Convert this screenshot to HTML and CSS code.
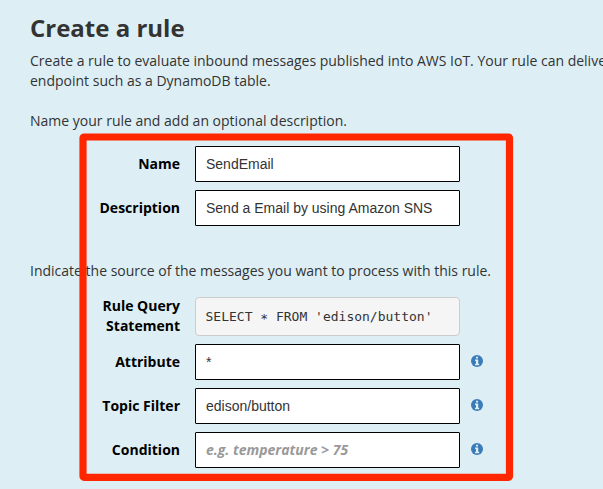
FILE: index.html
```html
<!DOCTYPE html>
<html lang="en">
<head>
<meta charset="utf-8">
<title>Create a rule</title>
<link rel="stylesheet" href="styles.css">
</head>
<body>
<main class="page">
  <h1>Create a rule</h1>
  <p class="intro">Create a rule to evaluate inbound messages published into AWS IoT. Your rule can deliver<br>endpoint such as a DynamoDB table.</p>
  <p class="lead">Name your rule and add an optional description.</p>
  <section class="fields">
    <label class="row"><span class="label">Name</span><input class="control" value="SendEmail"></label>
    <label class="row"><span class="label">Description</span><input class="control" value="Send a Email by using Amazon SNS"></label>
  </section>
  <p class="source">Indicate the source of the messages you want to process with this rule.</p>
  <section class="fields query">
    <div class="row tall"><span class="label">Rule Query Statement</span><code class="control statement">SELECT <span class="star">*</span> FROM 'edison/button'</code></div>
    <div class="row"><span class="label">Attribute</span><input class="control" value="*"><svg class="info" viewBox="0 0 12 12"><circle cx="6" cy="6" r="6"/><path d="M5 1.7h2v1.8H5zM4 4.5h3.2v4.2H8.2V10.2H4V8.7h1V6H4z"/></svg></div>
    <div class="row"><span class="label">Topic Filter</span><input class="control" value="edison/button"><svg class="info" viewBox="0 0 12 12"><circle cx="6" cy="6" r="6"/><path d="M5 1.7h2v1.8H5zM4 4.5h3.2v4.2H8.2V10.2H4V8.7h1V6H4z"/></svg></div>
    <div class="row"><span class="label">Condition</span><input class="control" placeholder="e.g. temperature &gt; 75"><svg class="info" viewBox="0 0 12 12"><circle cx="6" cy="6" r="6"/><path d="M5 1.7h2v1.8H5zM4 4.5h3.2v4.2H8.2V10.2H4V8.7h1V6H4z"/></svg></div>
  </section>
  <svg class="highlight" viewBox="0 0 436 350"><rect x="4" y="4" width="426.5" height="340.3" rx="1"/></svg>
</main>
</body>
</html>
```

FILE: styles.css
```css
* { box-sizing: border-box; }
body { margin: 0; background: #ddeff5; color: #333; font: 14px/20px "Open Sans", sans-serif; }
.page { position: relative; width: 603px; height: 489px; overflow: hidden; padding: 8px 0 0 30px; }
h1 { margin: 0 0 3px; font-size: 24px; line-height: 40px; font-weight: 700; }
p { margin: 0; white-space: nowrap; }
.lead { margin-top: 20px; }
.fields { display: flex; flex-direction: column; gap: 8px; margin-top: 15px; }
.row { display: flex; align-items: center; height: 36px; }
.label { width: 150px; margin-right: 15px; padding-left: 60px; text-align: right; font-weight: 700; color: #000; }
.control { width: 265px; height: 36px; padding: 0 10px; border: 1px solid #000; border-radius: 1px; background: #fff; color: #333; font: 14px "Liberation Sans", sans-serif; }
.control::placeholder { color: #999; opacity: 1; font: italic 700 14px "Open Sans", sans-serif; }
.source { margin-top: 35px; }
.query { margin-top: 15px; }
.tall { height: 40px; }
.statement { height: 39px; padding-left: 9.5px; border-color: #ccc; border-radius: 4px; background: #f5f5f5; font: 13px/37px "DejaVu Sans Mono", monospace; white-space: nowrap; }
.star { position: relative; top: 2px; }
.info { width: 12px; height: 12px; margin: 0 0 2px 11px; fill: #3b7bb7; }
.info path { fill: #ddeff5; }
.highlight { position: absolute; left: 79px; top: 133px; width: 436px; height: 350px; fill: none; stroke: #ff2600; stroke-width: 7.2; stroke-linejoin: round; pointer-events: none; }
```
